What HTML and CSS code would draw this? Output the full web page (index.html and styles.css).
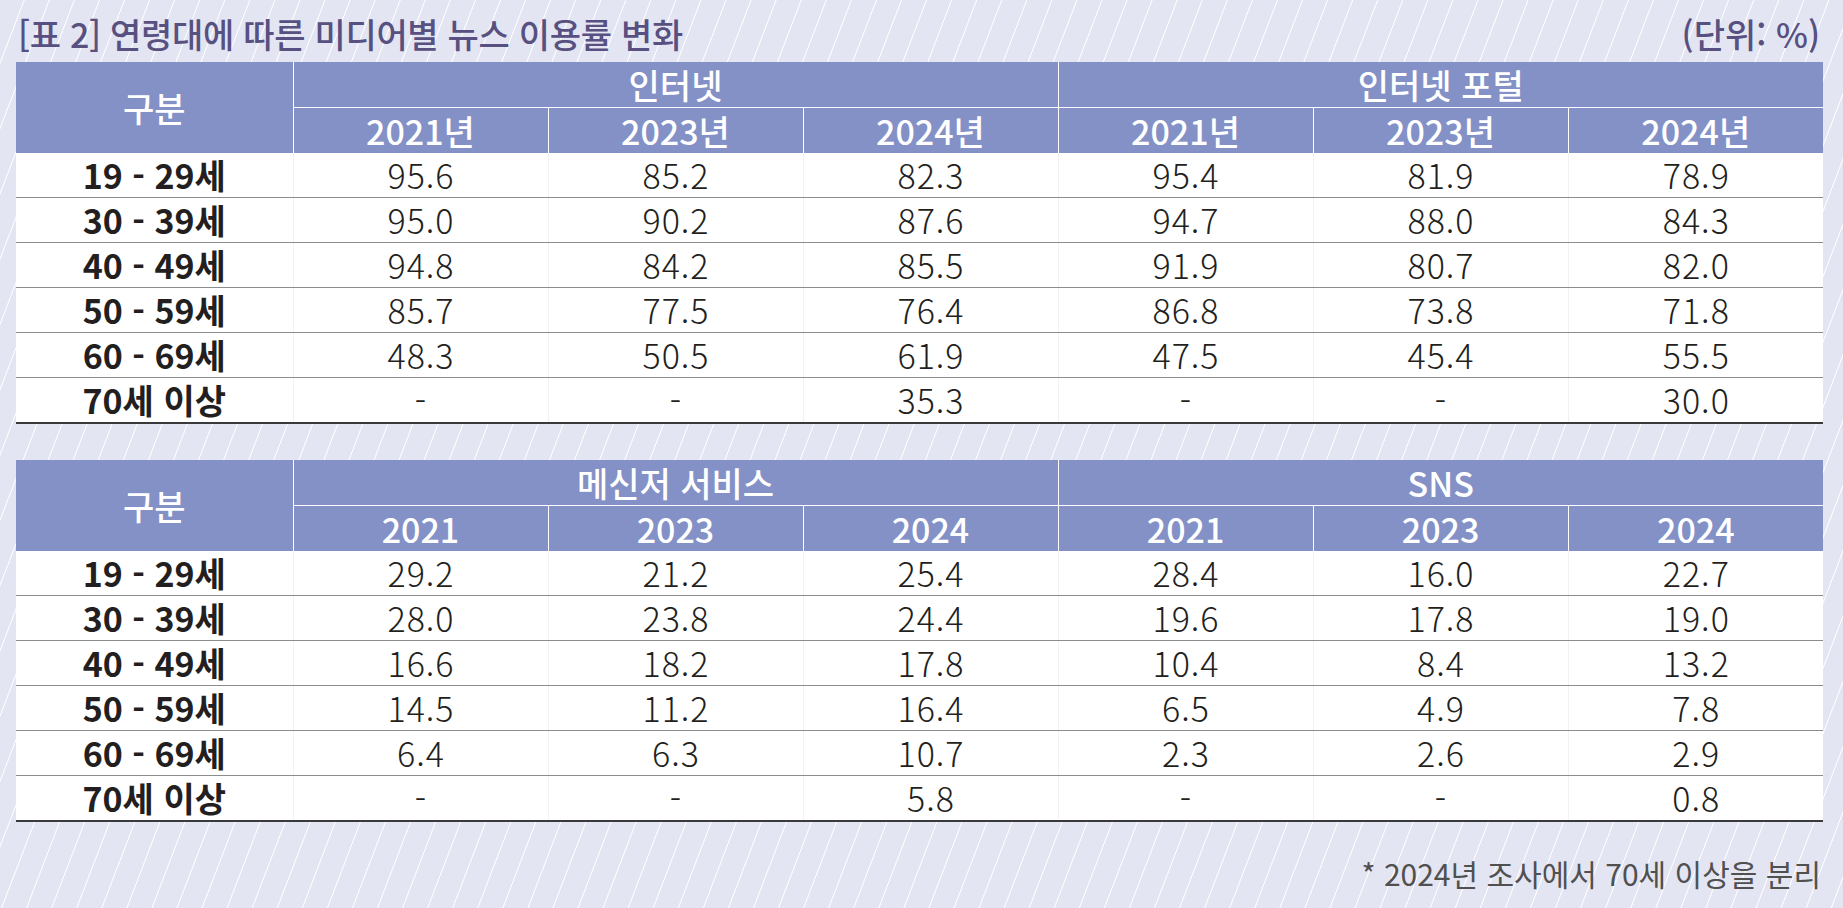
FILE: index.html
```html
<!DOCTYPE html>
<html lang="ko">
<head>
<meta charset="utf-8">
<title>연령대에 따른 미디어별 뉴스 이용률 변화</title>
<link rel="stylesheet" href="styles.css">
</head>
<body>
<div class="page">
  <div class="title-row">
    <h1 class="title">[표 2] 연령대에 따른 미디어별 뉴스 이용률 변화</h1>
    <span class="unit">(단위: %)</span>
  </div>

  <table class="data">
    <colgroup><col class="c-label"><col span="6" class="c-val"></colgroup>
    <thead>
      <tr><th rowspan="2" class="th-label">구분</th><th colspan="3">인터넷</th><th colspan="3">인터넷 포털</th></tr>
      <tr><th>2021년</th><th>2023년</th><th>2024년</th><th>2021년</th><th>2023년</th><th>2024년</th></tr>
    </thead>
    <tbody>
      <tr><td class="label">19 - 29세</td><td>95.6</td><td>85.2</td><td>82.3</td><td>95.4</td><td>81.9</td><td>78.9</td></tr>
      <tr><td class="label">30 - 39세</td><td>95.0</td><td>90.2</td><td>87.6</td><td>94.7</td><td>88.0</td><td>84.3</td></tr>
      <tr><td class="label">40 - 49세</td><td>94.8</td><td>84.2</td><td>85.5</td><td>91.9</td><td>80.7</td><td>82.0</td></tr>
      <tr><td class="label">50 - 59세</td><td>85.7</td><td>77.5</td><td>76.4</td><td>86.8</td><td>73.8</td><td>71.8</td></tr>
      <tr><td class="label">60 - 69세</td><td>48.3</td><td>50.5</td><td>61.9</td><td>47.5</td><td>45.4</td><td>55.5</td></tr>
      <tr><td class="label">70세 이상</td><td>-</td><td>-</td><td>35.3</td><td>-</td><td>-</td><td>30.0</td></tr>
    </tbody>
  </table>

  <table class="data second">
    <colgroup><col class="c-label"><col span="6" class="c-val"></colgroup>
    <thead>
      <tr><th rowspan="2" class="th-label">구분</th><th colspan="3">메신저 서비스</th><th colspan="3">SNS</th></tr>
      <tr><th>2021</th><th>2023</th><th>2024</th><th>2021</th><th>2023</th><th>2024</th></tr>
    </thead>
    <tbody>
      <tr><td class="label">19 - 29세</td><td>29.2</td><td>21.2</td><td>25.4</td><td>28.4</td><td>16.0</td><td>22.7</td></tr>
      <tr><td class="label">30 - 39세</td><td>28.0</td><td>23.8</td><td>24.4</td><td>19.6</td><td>17.8</td><td>19.0</td></tr>
      <tr><td class="label">40 - 49세</td><td>16.6</td><td>18.2</td><td>17.8</td><td>10.4</td><td>8.4</td><td>13.2</td></tr>
      <tr><td class="label">50 - 59세</td><td>14.5</td><td>11.2</td><td>16.4</td><td>6.5</td><td>4.9</td><td>7.8</td></tr>
      <tr><td class="label">60 - 69세</td><td>6.4</td><td>6.3</td><td>10.7</td><td>2.3</td><td>2.6</td><td>2.9</td></tr>
      <tr><td class="label">70세 이상</td><td>-</td><td>-</td><td>5.8</td><td>-</td><td>-</td><td>0.8</td></tr>
    </tbody>
  </table>

  <p class="note">* 2024년 조사에서 70세 이상을 분리</p>
</div>
</body>
</html>
```

FILE: styles.css
```css
html, body {
  margin: 0;
  padding: 0;
}

body {
  width: 1843px;
  height: 908px;
  overflow: hidden;
  background-color: #e3e5f2;
  background-image: repeating-linear-gradient(111deg,
    rgba(255, 255, 255, 0) 0px,
    rgba(255, 255, 255, 0) 21.8px,
    rgba(255, 255, 255, 0.85) 22.3px,
    rgba(255, 255, 255, 0.85) 23px,
    rgba(255, 255, 255, 0) 23.4px);
  font-family: "Noto Sans CJK KR", "Noto Sans", sans-serif;
  color: #231f20;
}

.page {
  padding: 0 20px 0 16px;
}

.title-row {
  height: 62px;
  box-sizing: border-box;
  padding: 6px 3px 0 2px;
  display: flex;
  align-items: center;
  justify-content: space-between;
}

.title {
  margin: 0;
  font-size: 34px;
  line-height: 1;
  font-weight: 500;
  color: #575080;
  letter-spacing: -0.3px;
}

.unit {
  font-size: 34px;
  line-height: 1;
  font-weight: 500;
  color: #575080;
}

.data {
  width: 1807px;
  border-collapse: collapse;
  table-layout: fixed;
}

.data.second {
  margin-top: 36px;
}

.c-label {
  width: 277px;
}

.c-val {
  width: 255px;
}

.data th {
  background: #8391c7;
  color: #ffffff;
  font-size: 34px;
  font-weight: 500;
  line-height: 1;
  height: 45px;
  padding: 0;
  border: 0;
}

.data thead tr:first-child th + th {
  border-left: 1px solid #ffffff;
}

.data thead tr:nth-child(2) th {
  border-left: 1px solid #ffffff;
  border-top: 1px solid #ffffff;
}

.data td {
  background: #ffffff;
  height: 44px;
  padding: 0 0 0 1px;
  text-align: center;
  font-size: 34px;
  font-weight: 300;
  line-height: 1;
  letter-spacing: 1px;
  color: #231f20;
  border-bottom: 1px solid #8c8c8c;
}

.data td + td {
  border-left: 1px solid #f2f2f2;
}

.data td.label {
  font-size: 34px;
  font-weight: 700;
  letter-spacing: 0;
  padding: 0;
}

.data tbody tr:last-child td {
  border-bottom: 2px solid #3a3a3a;
}

.note {
  margin: 36px 0 0;
  text-align: right;
  font-size: 30px;
  line-height: 1;
  font-weight: 400;
  color: #505050;
  padding-right: 2px;
}
```
